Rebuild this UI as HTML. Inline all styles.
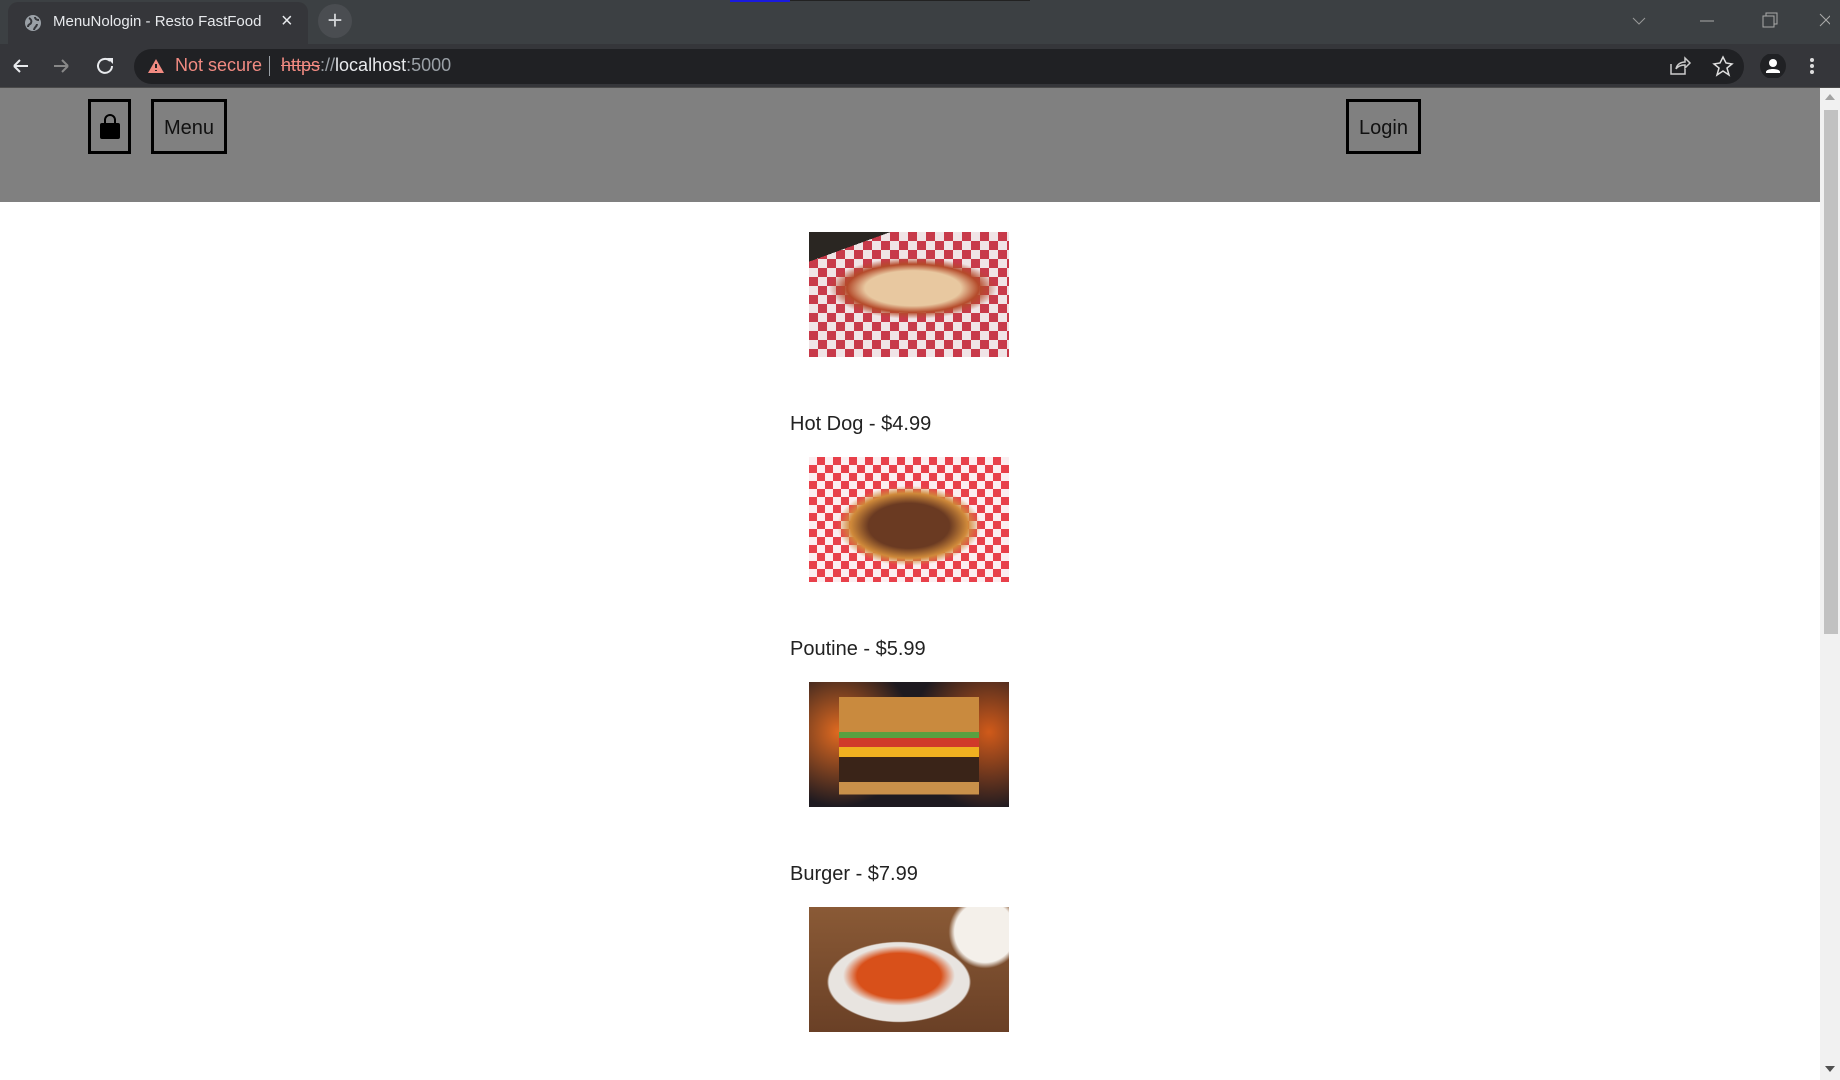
<!DOCTYPE html>
<html><head><meta charset="utf-8"><style>
*{margin:0;padding:0;box-sizing:border-box}
body{width:1840px;height:1080px;overflow:hidden;background:#fff;font-family:"Liberation Sans",sans-serif;position:relative}
.abs{position:absolute}
.tabbar{left:0;top:0;width:1840px;height:44px;background:#3c4043}
.tab{left:8px;top:2px;width:300px;height:42px;background:#35363a;border-radius:10px 10px 0 0;color:#e8eaed;font-size:15px}
.toolbar{left:0;top:44px;width:1840px;height:44px;background:#35363a;border-bottom:1px solid #4a4a4a}
.omni{left:134px;top:49px;width:1610px;height:35px;background:#202124;border-radius:18px}
.header{left:0;top:88px;width:1820px;height:114px;background:#808080}
.btn{border:3px solid #000;background:transparent;color:#111;font-size:20px;display:flex;align-items:center;justify-content:center;padding-top:4px}
.food{left:809px;width:200px;height:125px}
.lbl{left:790px;font-size:20px;color:#222}
.sb{left:1820px;top:88px;width:20px;height:992px;background:#f1f1f1}
</style></head><body>
<div class="abs tabbar"></div>
<div class="abs" style="left:730px;top:0;width:60px;height:2px;background:#1a1adf"></div>
<div class="abs" style="left:790px;top:0;width:240px;height:1px;background:#222"></div>
<div class="abs tab">
 <svg class="abs" style="left:16px;top:12px" width="18" height="18" viewBox="0 0 18 18"><circle cx="9" cy="9" r="8" fill="#9aa0a6"/><path d="M5 4c2 1 3 3 2 5s-3 1-3 4M11 3c0 2 2 3 4 3M10 16c0-3 3-3 3-6" stroke="#35363a" stroke-width="2" fill="none"/></svg>
 <span class="abs" style="left:45px;top:11px">MenuNologin - Resto FastFood</span>
 <span class="abs" style="left:273px;top:8px;font-size:20px">×</span>
</div>
<div class="abs" style="left:318px;top:4px;width:34px;height:34px;border-radius:17px;background:#4a4d51;color:#cfd1d4;font-size:26px;text-align:center;line-height:32px">+</div>
<svg class="abs" style="left:1630px;top:10px" width="200" height="24"><path d="M3 8l6 6 6-6" stroke="#999" fill="none"/><path d="M70 11h14" stroke="#aaa"/><rect x="133" y="6" width="11" height="11" stroke="#aaa" fill="none"/><path d="M136 6v-3h11v11h-3" stroke="#aaa" fill="none"/><path d="M190 4l12 12M202 4l-12 12" stroke="#aaa"/></svg>
<div class="abs toolbar"></div>
<svg class="abs" style="left:10px;top:54px" width="110" height="24"><path d="M4 12h14M4 12l6-6M4 12l6 6" stroke="#e8eaed" stroke-width="2" fill="none"/><path d="M44 12h14M58 12l-6-6M58 12l-6 6" stroke="#888" stroke-width="2" fill="none"/><path d="M100 7a7 7 0 1 0 2 5" stroke="#e8eaed" stroke-width="2" fill="none"/><path d="M97 4h6v6z" fill="#e8eaed"/></svg>
<div class="abs omni"></div>
<svg class="abs" style="left:147px;top:58px" width="18" height="16"><path d="M9 1L17 15H1z" fill="#f28b82"/><path d="M9 6v4M9 12v1" stroke="#202124" stroke-width="2"/></svg>
<div class="abs" style="left:175px;top:55px;font-size:18px;color:#f28b82">Not secure</div>
<div class="abs" style="left:269px;top:56px;width:1px;height:20px;background:#9aa0a6"></div>
<div class="abs" style="left:281px;top:55px;font-size:18px;color:#9aa0a6"><span style="color:#f28b82;text-decoration:line-through">https</span>://<span style="color:#e8eaed">localhost</span>:5000</div>
<svg class="abs" style="left:1668px;top:54px" width="160" height="24"><path d="M3 10v10h14v-5M8 15c1-5 5-7 9-7V4l5 5-5 5v-3c-4 0-7 1-9 4" stroke="#ccc" stroke-width="1.5" fill="none"/><path d="M55 3l3 6 6 1-5 4 2 7-6-4-6 4 2-7-5-4 6-1z" stroke="#ddd" stroke-width="1.5" fill="none"/><circle cx="105" cy="12" r="13" fill="#202124"/><circle cx="105" cy="9" r="4" fill="#fff"/><path d="M98 18c0-4 14-4 14 0v1H98z" fill="#fff"/><circle cx="144" cy="6" r="2" fill="#ddd"/><circle cx="144" cy="12" r="2" fill="#ddd"/><circle cx="144" cy="18" r="2" fill="#ddd"/></svg>
<div class="abs header"></div>
<div class="abs btn" style="left:88px;top:99px;width:43px;height:55px;padding-top:0"><svg width="22" height="26" viewBox="0 0 22 26"><path d="M6 9V6a5 5 0 0 1 10 0v3" stroke="#000" stroke-width="2" fill="none"/><rect x="1" y="9" width="20" height="16" rx="2" fill="#000"/></svg></div>
<div class="abs btn" style="left:151px;top:99px;width:76px;height:55px">Menu</div>
<div class="abs btn" style="left:1346px;top:99px;width:75px;height:55px">Login</div>
<div class="abs sb"><div class="abs" style="left:4px;top:22px;width:14px;height:524px;background:#c1c1c1"></div>
<svg class="abs" style="left:5px;top:6px" width="10" height="6"><path d="M0 6L5 0l5 6z" fill="#a3a3a3"/></svg>
<svg class="abs" style="left:5px;top:978px" width="10" height="6"><path d="M0 0L5 6l5-6z" fill="#505050"/></svg></div>

<div class="abs food" style="top:232px;background:linear-gradient(160deg,#2a2622 0 15%,transparent 15%),radial-gradient(ellipse 60% 35% at 52% 45%,#e8c8a0 0 40%,#b44a2a 55%,transparent 70%),repeating-conic-gradient(#c83a4a 0 25%,#f0e4e6 0 50%) 0 0/18px 18px"></div>
<div class="abs lbl" style="top:413px">Hot Dog - $4.99</div>
<div class="abs food" style="top:457px;background:radial-gradient(ellipse 45% 40% at 50% 55%,#6a3a22 0 45%,#d08a3a 65%,transparent 80%),repeating-conic-gradient(#e8404a 0 25%,#fbeef0 0 50%) 0 0/16px 16px"></div>
<div class="abs lbl" style="top:638px">Poutine - $5.99</div>
<div class="abs food" style="top:682px;background:linear-gradient(180deg,transparent 0 12%,#c98a3e 12% 40%,#5aa040 40% 45%,#d03a2a 45% 52%,#f0b020 52% 60%,#3a2418 60% 80%,#c9904a 80% 90%,transparent 90%) 50% 0/70% 100% no-repeat,radial-gradient(circle at 15% 40%,#e06a20,transparent 40%),radial-gradient(circle at 90% 40%,#d05a1a,transparent 40%),#1e1a20"></div>
<div class="abs lbl" style="top:863px">Burger - $7.99</div>
<div class="abs food" style="top:907px;background:radial-gradient(ellipse 35% 30% at 45% 55%,#d8501a 0 60%,transparent 80%),radial-gradient(ellipse 50% 45% at 45% 60%,#e8e4e0 0 70%,transparent 72%),radial-gradient(circle at 88% 20%,#f4f0ea 0 15%,transparent 18%),linear-gradient(#8a5a36,#6a4026)"></div>
</body></html>
